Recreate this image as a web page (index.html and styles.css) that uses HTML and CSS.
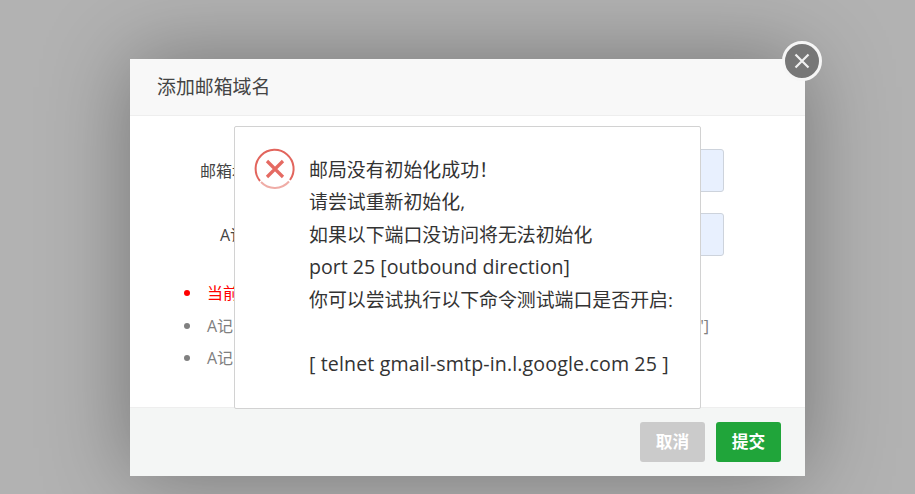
FILE: index.html
```html
<!DOCTYPE html>
<html lang="zh-CN">
<head>
<meta charset="utf-8">
<title>添加邮箱域名</title>
<link rel="stylesheet" href="styles.css">
</head>
<body>
<div class="dialog">
  <header class="dialog-head">添加邮箱域名</header>
  <main class="dialog-body">
    <div class="field"><label class="field-label">邮箱域名</label><div class="field-input"></div></div>
    <div class="field field-second"><label class="field-label field-label-a">A记录</label><div class="field-input"></div></div>
    <ul class="notes">
      <li class="note-red">当前</li>
      <li>A记<span class="note-end">"]</span></li>
      <li>A记</li>
    </ul>
  </main>
  <footer class="dialog-foot">
    <button class="btn btn-cancel">取消</button>
    <button class="btn btn-submit">提交</button>
  </footer>
  <button class="close" aria-label="关闭">
    <svg viewBox="0 0 20 20" width="20" height="20"><path d="M3.500 3.500 16.500 16.500M16.500 3.500 3.500 16.500" stroke="#f0f0f0" stroke-width="2.2" fill="none"/></svg>
  </button>
</div>
<div class="alert">
  <svg class="alert-icon" viewBox="0 0 42 42" width="42" height="42">
    <path d="M36 32A19 19 0 1 0 6 33" fill="none" stroke="#e2655d" stroke-width="2"/>
    <path d="M7 34A19 19 0 0 0 35 33.500" fill="none" stroke="#efaca6" stroke-width="2"/>
    <path d="M13 13 29 29M29 13 13 29" stroke="#e56a62" stroke-width="3.2" fill="none"/>
  </svg>
  <div class="alert-text">
    <p>邮局没有初始化成功！</p>
    <p>请尝试重新初始化,</p>
    <p>如果以下端口没访问将无法初始化</p>
    <p class="latin">port 25 [outbound direction]</p>
    <p>你可以尝试执行以下命令测试端口是否开启:</p>
    <p>&nbsp;</p>
    <p class="latin latin-wide">[ telnet gmail-smtp-in.l.google.com 25 ]</p>
  </div>
</div>
</body>
</html>
```
FILE: styles.css
```css
* { box-sizing: border-box; }
html, body { margin: 0; height: 100%; }
body {
  width: 915px;
  height: 494px;
  overflow: hidden;
  position: relative;
  background: #b2b2b2;
  font-family: "Open Sans", "Noto Sans CJK SC", sans-serif;
  color: #333;
}
.dialog {
  position: absolute;
  left: 130px;
  top: 59px;
  width: 675px;
  height: 417px;
  background: #fff;
  display: flex;
  flex-direction: column;
  box-shadow: 0 0 80px rgba(0,0,0,.34);
}
.dialog-head {
  height: 57px;
  padding: 0 27px;
  line-height: 56px;
  font-size: 18.9px;
  color: #444;
  background: #f8f8f8;
  border-bottom: 1px solid #eee;
}
.dialog-body { flex: 1; padding-top: 32px; font-size: 16px; }
.field { display: flex; align-items: center; height: 44px; }
.field-second { margin-top: 20px; }
.field-label { width: 134px; text-align: right; white-space: nowrap; flex: none; font-size: 16px; color: #444; }
.field-label-a { width: 132px; margin-right: 2px; }
.field-input {
  margin-left: auto;
  margin-right: 81px;
  width: 300px;
  height: 43px;
  background: #e8f0fe;
  border: 1px solid #cdd3dc;
  border-radius: 3px;
}
.notes {
  margin: 21px 0 0;
  padding: 0 96px 0 77px;
  list-style: none;
  font-size: 16px;
  color: #808080;
}
.notes li { height: 32.5px; line-height: 32.5px; position: relative; }
.notes li::before {
  content: "";
  position: absolute;
  left: -23px;
  top: 13px;
  width: 6px;
  height: 6px;
  border-radius: 50%;
  background: #808080;
}
.notes .note-red { color: #f00; }
.notes .note-red::before { background: #f00; }
.note-end { position: absolute; right: 0; }
.dialog-foot {
  height: 69px;
  background: #f4f6f5;
  border-top: 1px solid #eee;
  display: flex;
  justify-content: flex-end;
  gap: 11px;
  padding: 14px 24px 0 0;
}
.btn {
  width: 65px;
  height: 40px;
  border: 0;
  border-radius: 3px;
  padding: 0 0 2px;
  color: #fff;
  font: bold 16.7px "Noto Sans CJK SC", sans-serif;
}
.btn-cancel { background: #cbcbcb; }
.btn-submit { background: #20a53a; }
.close {
  position: absolute;
  left: 652px;
  top: -18px;
  width: 40px;
  height: 40px;
  padding: 0;
  border: 3.5px solid #f6f6f6;
  border-radius: 50%;
  background: #777;
  display: flex;
  align-items: center;
  justify-content: center;
}
.alert {
  position: absolute;
  left: 234px;
  top: 126px;
  width: 467px;
  height: 283px;
  background: #fff;
  border: 1px solid #d2d2d2;
  border-radius: 2px;
  display: flex;
  padding: 21px 0 0 19px;
}
.alert-icon { flex: none; margin-right: 14px; }
.alert-text { font-size: 18.9px; line-height: 32.4px; color: #333; padding-top: 6px; margin-left: -1px; }
.alert-text p { margin: 0; white-space: nowrap; }
.alert-text .latin { font-size: 19.6px; }
.alert-text .latin-wide { letter-spacing: .13px; }
```
